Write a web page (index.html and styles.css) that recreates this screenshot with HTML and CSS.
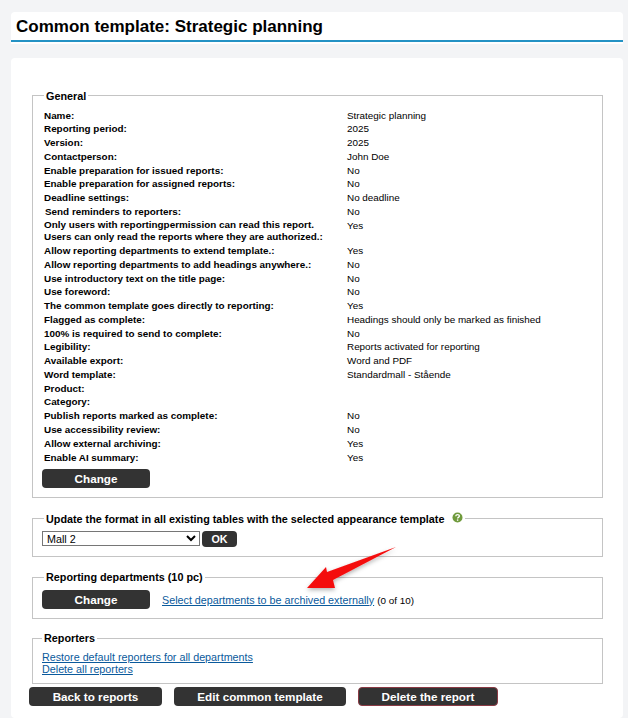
FILE: index.html
```html
<!DOCTYPE html>
<html lang="en">
<head>
  <meta charset="UTF-8">
  <meta name="viewport" content="width=device-width, initial-scale=1.0">
  <title>Common template</title>
  <link rel="stylesheet" href="styles.css">
</head>
<body>
  <header class="page-title">
    <h1>Common template: Strategic planning</h1>
  </header>

  <main class="card">
    <fieldset class="box box-general">
      <legend>General</legend>
      <div class="settings">
        <div class="row"><b>Name:</b><span>Strategic planning</span></div>
        <div class="row"><b>Reporting period:</b><span>2025</span></div>
        <div class="row"><b>Version:</b><span>2025</span></div>
        <div class="row"><b>Contactperson:</b><span>John Doe</span></div>
        <div class="row"><b>Enable preparation for issued reports:</b><span>No</span></div>
        <div class="row"><b>Enable preparation for assigned reports:</b><span>No</span></div>
        <div class="row"><b>Deadline settings:</b><span>No deadline</span></div>
        <div class="row row-indent"><b>Send reminders to reporters:</b><span>No</span></div>
        <div class="row row-tall"><b>Only users with reportingpermission can read this report.<br>Users can only read the reports where they are authorized.:</b><span>Yes</span></div>
        <div class="row"><b>Allow reporting departments to extend template.:</b><span>Yes</span></div>
        <div class="row"><b>Allow reporting departments to add headings anywhere.:</b><span>No</span></div>
        <div class="row"><b>Use introductory text on the title page:</b><span>No</span></div>
        <div class="row"><b>Use foreword:</b><span>No</span></div>
        <div class="row"><b>The common template goes directly to reporting:</b><span>Yes</span></div>
        <div class="row"><b>Flagged as complete:</b><span>Headings should only be marked as finished</span></div>
        <div class="row"><b>100% is required to send to complete:</b><span>No</span></div>
        <div class="row"><b>Legibility:</b><span>Reports activated for reporting</span></div>
        <div class="row"><b>Available export:</b><span>Word and PDF</span></div>
        <div class="row"><b>Word template:</b><span>Standardmall - Stående</span></div>
        <div class="row"><b>Product:</b><span></span></div>
        <div class="row"><b>Category:</b><span></span></div>
        <div class="row"><b>Publish reports marked as complete:</b><span>No</span></div>
        <div class="row"><b>Use accessibility review:</b><span>No</span></div>
        <div class="row"><b>Allow external archiving:</b><span>Yes</span></div>
        <div class="row"><b>Enable AI summary:</b><span>Yes</span></div>
      </div>
      <button class="btn btn-change">Change</button>
    </fieldset>

    <fieldset class="box box-format">
      <legend>Update the format in all existing tables with the selected appearance template
        <svg class="help" width="11" height="11" viewBox="0 0 11 11">
          <circle cx="5.5" cy="5.5" r="5" fill="#6f9a3c"/>
          <path d="M3.7 4.2c.1-1 .9-1.6 1.9-1.6s1.8.6 1.8 1.5c0 1.3-1.8 1.3-1.8 2.5" fill="none" stroke="#fff" stroke-width="1.3"/>
          <rect x="4.9" y="7.4" width="1.4" height="1.4" fill="#fff"/>
        </svg>
      </legend>
      <div class="format-line">
        <select class="format-select"><option>Mall 2</option></select>
        <button class="btn btn-ok">OK</button>
      </div>
    </fieldset>

    <fieldset class="box box-departments">
      <legend>Reporting departments (10 pc)</legend>
      <div class="dep-line">
        <button class="btn btn-change">Change</button>
        <span><a href="#">Select departments to be archived externally</a> <span class="count">(0 of 10)</span></span>
      </div>
    </fieldset>

    <fieldset class="box box-reporters">
      <legend>Reporters</legend>
      <a href="#">Restore default reporters for all departments</a><br>
      <a href="#">Delete all reporters</a>
    </fieldset>

    <div class="actions">
      <button class="btn btn-back">Back to reports</button>
      <button class="btn btn-edit">Edit common template</button>
      <button class="btn btn-delete">Delete the report</button>
    </div>

    <!-- annotation arrow drawn over the page -->
    <svg class="arrow" width="104" height="60" viewBox="0 0 104 60">
      <defs>
        <filter id="arrow-shadow" x="-20%" y="-20%" width="140%" height="150%">
          <feDropShadow dx="0" dy="2" stdDeviation="2" flood-color="#000" flood-opacity="0.3"/>
        </filter>
      </defs>
      <path d="M96 7 L33 40 L35 48 L7 48 L26 27 L27 32 Z" fill="#f40d10" filter="url(#arrow-shadow)"/>
    </svg>
  </main>
</body>
</html>
```

FILE: styles.css
```css
html, body {
  height: 100%;
}

body {
  margin: 0;
  padding: 12px 5px 0 11px;
  box-sizing: border-box;
  overflow: hidden;
  background: #f3f4f6;
  color: #000;
  font-family: "Liberation Sans", Arial, sans-serif;
  font-size: 10.75px;
}

.page-title {
  background: #fff;
  border-radius: 4px 4px 0 0;
  height: 32px;
}

.page-title h1 {
  margin: 0;
  padding: 5px 0 0 5px;
  height: 30px;
  box-sizing: border-box;
  border-bottom: 2px solid #2492c4;
  font-size: 17px;
  line-height: 20px;
}

.card {
  position: relative;
  margin-top: 14px;
  padding: 30px 20px 0 21px;
  height: 630px;
  background: #fff;
  border-radius: 4px;
}

.box {
  margin: 0 0 12px;
  padding: 0 11px 8px;
  border: 1px solid #c4c4c4;
  min-width: 0;
  box-sizing: border-box;
}

.box legend {
  padding: 0 2px;
  font-size: 10.8px;
  font-weight: bold;
  line-height: 14px;
}

.box-general legend,
.box-format legend {
  padding-top: 2px;
  line-height: 12px;
}

.box-general {
  height: 410px;
  margin-bottom: 13px;
}

.box-format {
  height: 46px;
  margin-bottom: 13px;
}

.box-departments {
  height: 49px;
}

.box-reporters {
  height: 53px;
  margin-bottom: 3px;
  padding-left: 9px;
  line-height: 12px;
}

.box-reporters a:first-of-type {
  display: inline-block;
  margin-top: 6px;
}

.settings {
  padding-top: 6.6px;
  font-size: 9.9px;
}

.row {
  display: grid;
  grid-template-columns: 303px 1fr;
  height: 13.77px;
  line-height: 13.77px;
}

.row-tall {
  height: 25.3px;
}

.row-tall b {
  line-height: 12px;
}

.row-indent b {
  padding-left: 1px;
}

.help {
  margin: -1px 0 -1px 5px;
  vertical-align: top;
}

.btn {
  border: 0;
  border-radius: 4px;
  background: #333;
  color: #fff;
  font-family: inherit;
  font-size: 11.7px;
  font-weight: bold;
  padding: 0;
  height: 19px;
}

.btn-change {
  width: 108px;
  margin-left: -2px;
}

.box-general .btn-change {
  margin-top: 4.4px;
}

.format-line {
  display: flex;
  align-items: flex-start;
  gap: 2px;
  margin-left: -2px;
  padding-top: 6px;
}

.format-select {
  width: 158px;
  height: 15px;
  padding: 0;
  border: 1px solid #767676;
  background: #fff;
  font-family: inherit;
  font-size: 10.75px;
}

.btn-ok {
  width: 35px;
  height: 16px;
  font-size: 10.75px;
}

.dep-line {
  display: flex;
  align-items: center;
  gap: 12px;
  padding-top: 6px;
}

.count {
  font-size: 9.9px;
}

a {
  color: #0a5a9c;
}

.actions {
  display: flex;
  gap: 12px;
  margin-left: -3px;
}

.btn-back {
  width: 133px;
}

.btn-edit {
  width: 172px;
}

.btn-delete {
  width: 140px;
  border: 1px solid #8a3a44;
}

.arrow {
  position: absolute;
  left: 289px;
  top: 482px;
}
```
